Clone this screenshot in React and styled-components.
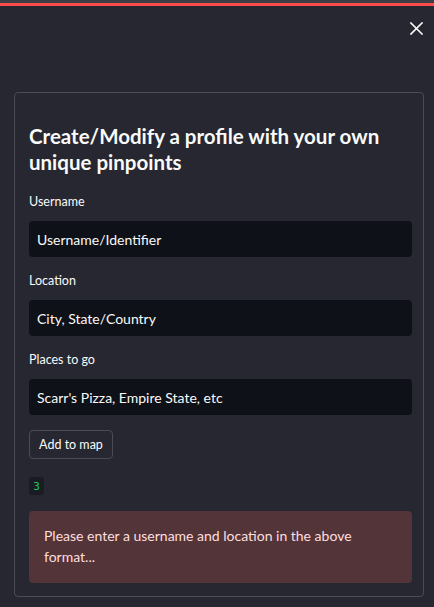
import React from "react";
import styled, { createGlobalStyle } from "styled-components";

const Global = createGlobalStyle`
  html, body { margin: 0; padding: 0; background: #262730; }
  body { font-family: "Lato", "Noto Sans", sans-serif; color: #fafafa; }
  * { box-sizing: border-box; }
`;

const Sidebar = styled.div`
  width: 434px;
  height: 607px;
  background: #262730;
  display: flex;
  flex-direction: column;
  overflow: hidden;
`;

const TopStrip = styled.div`
  height: 3px;
  background: #3d3e44;
`;

const Decoration = styled.div`
  height: 3px;
  background: #ff4b4b;
`;

const Header = styled.div`
  display: flex;
  justify-content: flex-end;
  padding: 14px 10px 0 0;
  height: 86px;
`;

const CloseButton = styled.button`
  width: 16px;
  height: 16px;
  padding: 0;
  border: none;
  background: transparent;
  display: flex;
  align-items: center;
  justify-content: center;
  cursor: pointer;
`;

const Form = styled.div`
  margin: 0 10px 0 14px;
  border: 1px solid #4a4b55;
  border-radius: 4px;
  padding: 30px 11px 13px 14px;
  display: flex;
  flex-direction: column;
`;

const Title = styled.h2`
  margin: 0 0 17px;
  font-size: 20.5px;
  line-height: 26px;
  font-weight: 700;
  color: #fafafa;
`;

const Field = styled.div`
  display: flex;
  flex-direction: column;
  margin-bottom: ${(p) => p.$gap}px;
`;

const Label = styled.label`
  font-size: 12.5px;
  line-height: 20px;
  margin-bottom: 9px;
  color: #fafafa;
`;

const Input = styled.div`
  height: 36px;
  background: #0e1117;
  border-radius: 4px;
  padding: 0 8px;
  display: flex;
  align-items: center;
  font-size: 14px;
  color: #fafafa;
`;

const Button = styled.button`
  align-self: flex-start;
  height: 29px;
  width: 84px;
  border: 1px solid #4a4b55;
  border-radius: 4px;
  background: #262730;
  color: #fafafa;
  font-family: inherit;
  font-size: 12.5px;
  padding: 0;
  margin-bottom: 18px;
`;

const Badge = styled.code`
  align-self: flex-start;
  width: 15px;
  height: 18px;
  border-radius: 3px;
  background: #1a1c24;
  color: #21c354;
  font-family: "DejaVu Sans Mono", monospace;
  font-size: 11px;
  display: flex;
  align-items: center;
  justify-content: center;
  margin-bottom: 16px;
`;

const Alert = styled.div`
  background: #533439;
  border-radius: 4px;
  padding: 15px 15px 16px;
  font-size: 14px;
  line-height: 20.5px;
  color: #ffdede;
`;

export default function App() {
  return (
    <Sidebar>
      <Global />
      <TopStrip />
      <Decoration />
      <Header>
        <CloseButton aria-label="Close">
          <svg width="13" height="13" viewBox="0 0 13 13">
            <path d="M1 1L12 12M12 1L1 12" stroke="#fafafa" strokeWidth="1.6" strokeLinecap="square" />
          </svg>
        </CloseButton>
      </Header>
      <Form>
        <Title>Create/Modify a profile with your own unique pinpoints</Title>
        <Field $gap={14}>
          <Label>Username</Label>
          <Input>Username/Identifier</Input>
        </Field>
        <Field $gap={14}>
          <Label>Location</Label>
          <Input>City, State/Country</Input>
        </Field>
        <Field $gap={15}>
          <Label>Places to go</Label>
          <Input>Scarr's Pizza, Empire State, etc</Input>
        </Field>
        <Button>Add to map</Button>
        <Badge>3</Badge>
        <Alert>Please enter a username and location in the above format...</Alert>
      </Form>
    </Sidebar>
  );
}
